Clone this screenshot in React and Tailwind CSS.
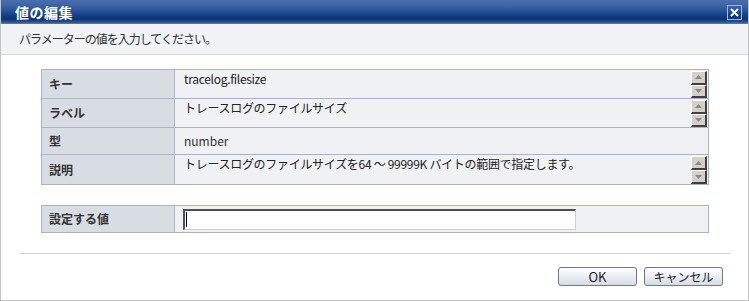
import React from 'react';

const font = { fontFamily: '"Noto Sans CJK JP", "Liberation Sans", sans-serif' };

const rows = [
  { label: 'キー', value: 'tracelog.filesize', scroll: true },
  { label: 'ラベル', value: 'トレースログのファイルサイズ', scroll: true },
  { label: '型', value: 'number', scroll: false },
  { label: '説明', value: 'トレースログのファイルサイズを64 〜 99999K バイトの範囲で指定します。', scroll: true },
];

function ScrollBtn({ up }) {
  return (
    <div className="w-[16px] h-[14px] bg-[#d4d0c8] border-t border-l border-t-white border-l-white border-b-2 border-r-2 border-b-[#404040] border-r-[#404040] flex items-center justify-center">
      <svg width="7" height="4" viewBox="0 0 7 4">
        {up ? <path d="M3.5 0 L7 4 L0 4 Z" fill="#8a8a8a" /> : <path d="M0 0 L7 0 L3.5 4 Z" fill="#8a8a8a" />}
      </svg>
    </div>
  );
}

function Row({ label, value, scroll, last }) {
  return (
    <div className={`flex ${last ? '' : 'border-b border-[#a9b4c4]'} ${scroll ? 'h-[29px]' : 'h-[27px]'}`}>
      <div className="w-[133px] shrink-0 bg-[#d8dce3] border-r border-[#a9b4c4] flex items-center pl-[7px] text-[12px] font-bold text-[#333]">
        {label}
      </div>
      {scroll ? (
        <div className="flex-1 bg-[#f0f1f3] flex pl-[9px] pr-[1px]">
          <div className="flex-1 text-[12px] text-[#222] leading-[14px] pt-[2px] tracking-[-0.3px]">{value}</div>
          <div className="flex flex-col pt-[1px]">
            <ScrollBtn up />
            <ScrollBtn />
          </div>
        </div>
      ) : (
        <div className="flex-1 bg-[#f0f1f3] flex items-center pl-[9px] text-[12px] text-[#333]">{value}</div>
      )}
    </div>
  );
}

export default function App() {
  return (
    <div className="w-[749px] h-[301px] bg-white border-l border-r border-b border-[#c4c4c4] flex flex-col overflow-hidden" style={font}>
      {/* Title bar */}
      <div className="h-[24px] shrink-0 flex items-center justify-between pl-[14px] pr-[6px] bg-[linear-gradient(to_bottom,#4a6fae_0%,#3760a2_30%,#16438a_60%,#0a3473_80%,#2b5592_92%,#5d7cb2_100%)]">
        <span className="text-white text-[14px] font-bold tracking-[0.5px]">値の編集</span>
        <div className="w-[15px] h-[15px] border border-[#a8b8d4] flex items-center justify-center">
          <svg width="9" height="9" viewBox="0 0 9 9">
            <path d="M1 1 L8 8 M8 1 L1 8" stroke="white" strokeWidth="2" />
          </svg>
        </div>
      </div>

      {/* Description */}
      <div className="h-[31px] shrink-0 bg-[#f1f2f3] border-b border-[#d3d6da] flex items-center pl-[18px] text-[12px] tracking-[-1px] text-[#333]">
        パラメーターの値を入力してください。
      </div>

      {/* Info table */}
      <div className="ml-[40px] mr-[39px] mt-[14px] border border-[#a9b4c4]">
        {rows.map((r, i) => (
          <Row key={r.label} {...r} last={i === rows.length - 1} />
        ))}
      </div>

      {/* Value input */}
      <div className="ml-[40px] mr-[39px] mt-[20px] border border-[#a9b4c4] flex h-[28px]">
        <div className="w-[133px] shrink-0 bg-[#d8dce3] border-r border-[#a9b4c4] flex items-center pl-[7px] text-[12px] font-bold text-[#333]">
          設定する値
        </div>
        <div className="flex-1 bg-[#f0f1f3] flex items-center pl-[8px]">
          <div className="w-[393px] h-[21px] bg-white border-t-2 border-l-2 border-t-[#505050] border-l-[#505050] border-b border-r border-b-[#d4d0c8] border-r-[#d4d0c8] flex items-center pl-[1px]">
            <span className="w-[1px] h-[15px] bg-black" />
          </div>
        </div>
      </div>

      {/* Separator */}
      <div className="mx-[18px] mt-[20px] h-[1px] bg-[#d5d8db]" />

      {/* Buttons */}
      <div className="flex justify-end gap-[7px] mr-[25px] mt-[13px]">
        <button className="w-[79px] h-[19px] rounded-[3px] border border-[#6f7885] bg-[linear-gradient(to_bottom,#ffffff,#e6ebf1_60%,#d5dce5)] text-[13px] leading-none text-[#222] flex items-center justify-center">
          OK
        </button>
        <button className="w-[79px] h-[19px] rounded-[3px] border border-[#6f7885] bg-[linear-gradient(to_bottom,#ffffff,#e6ebf1_60%,#d5dce5)] text-[12px] leading-none text-[#222] flex items-center justify-center">
          キャンセル
        </button>
      </div>
    </div>
  );
}
